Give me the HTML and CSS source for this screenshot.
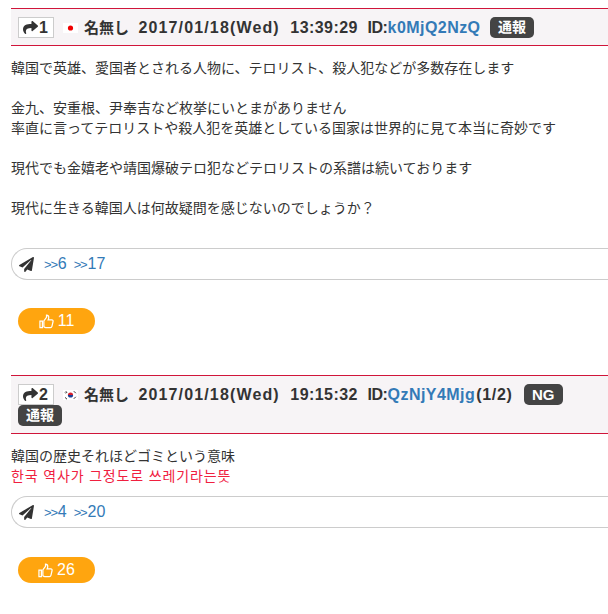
FILE: index.html
```html
<!DOCTYPE html>
<html lang="ja">
<head>
    <meta charset="UTF-8">
    <meta name="viewport" content="width=device-width, initial-scale=1.0">
    <title>スレッド</title>
    <link rel="stylesheet" href="styles.css">
</head>
<body>
    <div class="thread">
        <!-- レス 1 -->
        <div class="post">
            <div class="post-head">
                <span class="anchor">
                    <svg class="share-icon" viewBox="0 0 512 512"><path d="M503.7 189.8L327.7 37.9C312.3 24.5 288 35.3 288 56v80.1C127.4 137.9 0 170.1 0 322.3c0 61.4 39.6 122.3 83.3 154.1 13.7 9.9 33.1-2.5 28.1-18.6C66.1 312.8 132.9 274.3 288 272.1V360c0 20.7 24.3 31.5 39.7 18.2l176-152c11.1-9.6 11.1-26.8 0-36.4z"/></svg>1
                </span>
                <svg class="flag" viewBox="0 0 15 10"><rect width="15" height="10" fill="#fff"/><circle cx="7.5" cy="5" r="2.6" fill="#f00000"/></svg>
                <span class="meta name">名無し</span>
                <span class="meta date">2017/01/18(Wed)</span>
                <span class="meta">13:39:29</span>
                <span class="meta"><span class="id-label">ID:</span><a class="link" href="#">k0MjQ2NzQ</a></span>
                <span class="badge">通報</span>
            </div>
            <div class="post-body">
                韓国で英雄、愛国者とされる人物に、テロリスト、殺人犯などが多数存在します<br>
                <br>
                金九、安重根、尹奉吉など枚挙にいとまがありません<br>
                率直に言ってテロリストや殺人犯を英雄としている国家は世界的に見て本当に奇妙です<br>
                <br>
                現代でも金嬉老や靖国爆破テロ犯などテロリストの系譜は続いております<br>
                <br>
                現代に生きる韓国人は何故疑問を感じないのでしょうか？
            </div>
            <div class="replies">
                <svg class="plane-icon" viewBox="0 0 512 512"><path d="M476 3.2L12.5 270.6c-18.1 10.4-15.8 35.6 2.2 43.2L121 358.4l287.3-253.2c5.5-4.9 13.3 2.6 8.6 8.3L176 407v80.5c0 23.6 28.5 32.9 42.5 15.8L282 426l124.6 52.2c14.2 6 30.4-2.9 33-18.2l72-432C515 7.8 493.3-6.8 476 3.2z"/></svg>
                <a class="link" href="#"><span class="arrows">&gt;&gt;</span>6</a>
                <a class="link" href="#"><span class="arrows">&gt;&gt;</span>17</a>
            </div>
            <div class="like">
                <svg class="thumb-icon" viewBox="0 0 16 16"><path d="M1 7.5h2.6v7H1zM5.2 7.4 8 3.6V1.2c1.5 0 2.4 1 2.4 2.4 0 1-.3 1.8-.7 2.7h4c1 0 1.5.8 1.3 1.7l-1.2 5.2c-.2.8-.8 1.3-1.6 1.3H7.3c-.9 0-1.5-.4-2.1-.9z"/></svg>
                <span>11</span>
            </div>
        </div>

        <!-- レス 2 -->
        <div class="post">
            <div class="post-head">
                <span class="anchor">
                    <svg class="share-icon" viewBox="0 0 512 512"><path d="M503.7 189.8L327.7 37.9C312.3 24.5 288 35.3 288 56v80.1C127.4 137.9 0 170.1 0 322.3c0 61.4 39.6 122.3 83.3 154.1 13.7 9.9 33.1-2.5 28.1-18.6C66.1 312.8 132.9 274.3 288 272.1V360c0 20.7 24.3 31.5 39.7 18.2l176-152c11.1-9.6 11.1-26.8 0-36.4z"/></svg>2
                </span>
                <svg class="flag" viewBox="0 0 15 10"><rect width="15" height="10" fill="#fff"/><path d="M4.9 5a2.6 2.6 0 0 1 5.2 0z" fill="#d8202c"/><path d="M4.9 5a2.6 2.6 0 0 0 5.2 0z" fill="#1c3f94"/><path d="M2 2.6 3.4 1.2M2.8 3.4 4.2 2M10.8 1.2 12.8 3.2M10.8 8.8 12.8 6.8M2 7.4 4 9.2" stroke="#222" stroke-width=".9"/></svg>
                <span class="meta name">名無し</span>
                <span class="meta date">2017/01/18(Wed)</span>
                <span class="meta">19:15:32</span>
                <span class="meta"><span class="id-label">ID:</span><a class="link" href="#">QzNjY4Mjg</a><span class="count">(1/2)</span></span>
                <span class="badge badge-ng">NG</span>
                <span class="badge badge-report">通報</span>
            </div>
            <div class="post-body">
                韓国の歴史それほどゴミという意味<br>
                <span class="translated">한국 역사가 그정도로 쓰레기라는뜻</span>
            </div>
            <div class="replies">
                <svg class="plane-icon" viewBox="0 0 512 512"><path d="M476 3.2L12.5 270.6c-18.1 10.4-15.8 35.6 2.2 43.2L121 358.4l287.3-253.2c5.5-4.9 13.3 2.6 8.6 8.3L176 407v80.5c0 23.6 28.5 32.9 42.5 15.8L282 426l124.6 52.2c14.2 6 30.4-2.9 33-18.2l72-432C515 7.8 493.3-6.8 476 3.2z"/></svg>
                <a class="link" href="#"><span class="arrows">&gt;&gt;</span>4</a>
                <a class="link" href="#"><span class="arrows">&gt;&gt;</span>20</a>
            </div>
            <div class="like">
                <svg class="thumb-icon" viewBox="0 0 16 16"><path d="M1 7.5h2.6v7H1zM5.2 7.4 8 3.6V1.2c1.5 0 2.4 1 2.4 2.4 0 1-.3 1.8-.7 2.7h4c1 0 1.5.8 1.3 1.7l-1.2 5.2c-.2.8-.8 1.3-1.6 1.3H7.3c-.9 0-1.5-.4-2.1-.9z"/></svg>
                <span>26</span>
            </div>
        </div>
    </div>
</body>
</html>
```

FILE: styles.css
```css
html, body {
    overflow: hidden;
}

body {
    margin: 0;
    height: 614px;
    background-color: #fff;
    color: #333;
    font-family: 'Liberation Sans', 'Noto Sans CJK JP', sans-serif;
    font-size: 14px;
    line-height: 20px;
}

.thread {
    padding: 8px 0 0 11px;
}

.post {
    margin-bottom: 41px;
}

.post-head {
    box-sizing: border-box;
    border-top: 1px solid #d0153a;
    border-bottom: 1px solid #d0153a;
    background-color: #f7f4f6;
    padding: 8px 7px 0;
    min-height: 38px;
    font-size: 16px;
    font-weight: bold;
    line-height: 21px;
}

.post:nth-child(2) .post-head {
    min-height: 59px;
}

.anchor {
    display: inline-flex;
    align-items: center;
    box-sizing: border-box;
    width: 36px;
    height: 21px;
    border: 1px solid #ccc;
    background-color: #fff;
    padding-left: 4px;
    vertical-align: top;
    font-size: 16px;
}

.share-icon {
    width: 15px;
    height: 15px;
    margin-right: 1px;
    fill: #333;
}

.flag {
    width: 15px;
    height: 10px;
    margin: 0 0 0 5px;
}

.meta {
    margin-left: 1px;
    margin-right: 4px;
    letter-spacing: .45px;
}

.name {
    font-size: 15px;
    letter-spacing: 0;
}

.date {
    margin-right: 5px;
    letter-spacing: 1.15px;
}

.id-label {
    letter-spacing: -.4px;
}

.count {
    margin: 0 2px 0 1px;
    letter-spacing: .7px;
}

.link {
    color: #337ab7;
    text-decoration: none;
}

.badge {
    display: inline-block;
    box-sizing: border-box;
    height: 21px;
    margin-left: 1px;
    padding: 0 8px;
    border-radius: 5px;
    background-color: #444;
    color: #fff;
    font-size: 14px;
    vertical-align: top;
}

.badge-ng {
    font-size: 15px;
}

.badge-report {
    margin-left: 0;
}

.post-body {
    padding: 12px 0 0;
}

.translated {
    color: #f0203f;
    font-family: 'Liberation Sans', 'Noto Sans CJK KR', sans-serif;
    letter-spacing: .85px;
}

.replies {
    display: flex;
    align-items: center;
    gap: 7px;
    box-sizing: border-box;
    height: 32px;
    margin-top: 30px;
    padding-left: 7px;
    border: 1px solid #ccc;
    border-right: none;
    border-radius: 16px 0 0 16px;
    font-size: 16px;
}

.post:nth-child(2) .replies {
    margin-top: 10px;
}

.arrows {
    font-size: 13px;
    letter-spacing: -1.2px;
    margin-right: 1px;
}

.plane-icon {
    width: 15px;
    height: 15px;
    margin-right: 3px;
    fill: #333;
}

.like {
    display: flex;
    align-items: center;
    justify-content: center;
    gap: 4px;
    width: 77px;
    height: 26px;
    margin: 28px 0 0 7px;
    border-radius: 13px;
    background-color: #ffa50f;
    color: #fff;
    font-size: 16px;
}

.post:nth-child(2) .like {
    margin-top: 29px;
}

.thumb-icon {
    width: 15px;
    height: 15px;
    fill: none;
    stroke: #fff;
    stroke-width: 1.3;
}
```
